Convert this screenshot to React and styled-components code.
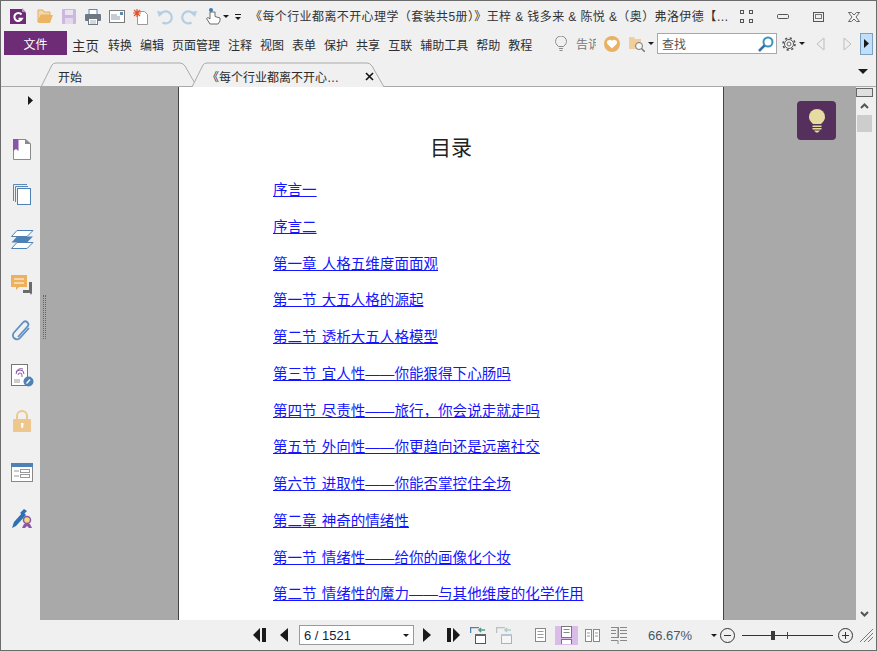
import React from 'react';
import styled, { createGlobalStyle } from 'styled-components';

const GlobalStyle = createGlobalStyle`
  html, body {
    margin: 0;
    padding: 0;
    overflow: hidden;
    background: #f0f0f0;
  }
`;

const Window = styled.div`
  box-sizing: border-box;
  width: 877px;
  height: 651px;
  border: 1px solid #6b6b6b;
  background: #f0f0f0;
  display: flex;
  flex-direction: column;
  overflow: hidden;
  color: #2b2b2b;
  font-family: "Liberation Sans", "Noto Sans CJK SC", sans-serif;
  font-size: 12px;
`;

const TitleBar = styled.div`
  height: 29px;
  flex: none;
  display: flex;
  align-items: center;
  padding: 2px 0 0 9px;
  box-sizing: border-box;
`;

const QuickIcon = styled.svg`
  flex: none;
  display: block;
  margin-left: ${({ $ml }) => $ml ?? 8}px;
`;

const Caret = styled.span`
  flex: none;
  width: 0;
  height: 0;
  margin-left: ${({ $ml }) => $ml ?? 3}px;
  border-left: ${({ $s }) => $s ?? 3}px solid transparent;
  border-right: ${({ $s }) => $s ?? 3}px solid transparent;
  border-top: ${({ $s }) => $s ?? 3}px solid #1c1c1c;
`;

const DashCaret = styled(Caret)`
  position: relative;
  margin-left: 6px;
  margin-top: 3px;
  &::before {
    content: '';
    position: absolute;
    left: -3px;
    top: -6px;
    width: 6px;
    height: 1px;
    background: #1c1c1c;
  }
`;

const DocTitle = styled.div`
  width: 478px;
  margin-left: 9px;
  flex: none;
  white-space: nowrap;
  overflow: hidden;
  font-size: 12px;
  line-height: 18px;
  letter-spacing: 0.4px;
  color: #333;
`;

const WinControls = styled.div`
  display: flex;
  align-items: center;
  margin-left: 12px;
`;

const MenuBar = styled.div`
  height: 27px;
  flex: none;
  display: flex;
  align-items: flex-start;
  padding: 1px 3px 0;
  box-sizing: border-box;
`;

const FileButton = styled.div`
  width: 63px;
  height: 24px;
  background: #6d2c75;
  color: #fff;
  display: flex;
  align-items: center;
  justify-content: center;
  font-size: 12px;
  flex: none;
`;

const MenuItems = styled.nav`
  display: flex;
  margin-left: 5px;
  height: 27px;
  align-items: center;
  gap: 8px;
`;

const MenuItem = styled.span`
  font-size: ${({ $home }) => ($home ? 13.5 : 12)}px;
  margin-right: ${({ $home }) => ($home ? 1 : 0)}px;
  white-space: nowrap;
  color: #2e2e2e;
`;

const MenuTools = styled.div`
  margin-left: auto;
  display: flex;
  align-items: center;
  height: 25px;
`;

const TellMe = styled.span`
  width: 20px;
  margin-left: 9px;
  overflow: hidden;
  white-space: nowrap;
  color: #777;
  font-size: 12px;
`;

const SearchBox = styled.div`
  box-sizing: border-box;
  width: 120px;
  height: 21px;
  margin-left: 3px;
  padding: 0 2px 0 4px;
  background: #fff;
  border: 1px solid #a8a8a8;
  display: flex;
  align-items: center;
  justify-content: space-between;
  color: #555;
  font-size: 12px;
`;

const NextButton = styled.div`
  box-sizing: border-box;
  width: 13px;
  height: 22px;
  margin-left: 8px;
  background: #bfdffa;
  border: 1px solid #7da2c1;
  display: flex;
  align-items: center;
  justify-content: center;
`;

const TabBar = styled.div`
  box-sizing: border-box;
  height: 30px;
  flex: none;
  display: flex;
  align-items: flex-end;
  position: relative;
  padding-left: 40px;
  border-bottom: 1px solid #a9a9a9;
`;

const Tab = styled.div`
  position: relative;
  box-sizing: border-box;
  width: ${({ $w }) => $w}px;
  height: 25px;
  margin-left: ${({ $ml }) => $ml ?? 0}px;
  margin-bottom: -1px;
  display: flex;
  align-items: center;
  padding: 4px 12px 0 ${({ $pl }) => $pl}px;
  font-size: 12px;
  color: #2b2b2b;
  white-space: nowrap;
`;

const TabShape = styled.svg`
  position: absolute;
  left: 0;
  top: 0;
`;

const TabLabel = styled.span`
  position: relative;
  flex: 1;
`;

const TabClose = styled.svg`
  position: relative;
  flex: none;
`;

const TabsMenu = styled(Caret)`
  position: absolute;
  right: 8px;
  top: 12px;
`;

const Main = styled.div`
  flex: 1;
  min-height: 0;
  display: flex;
`;

const Sidebar = styled.aside`
  width: 39px;
  flex: none;
  display: flex;
  flex-direction: column;
  align-items: center;
  box-sizing: border-box;
  padding-left: 3px;
`;

const SideToggle = styled.div`
  width: 100%;
  height: 27px;
  display: flex;
  align-items: center;
  justify-content: flex-end;
  padding-right: 7px;
  box-sizing: border-box;
  margin-bottom: 13px;
`;

const SideSlot = styled.div`
  height: 45.2px;
  flex: none;
  display: flex;
  align-items: center;
  justify-content: center;
  margin-top: ${({ $mt }) => $mt ?? 0}px;
`;

const Viewer = styled.div`
  position: relative;
  flex: 1;
  min-width: 0;
  background: #a9a9a9;
  padding-left: 138px;
  overflow: hidden;
`;

const Grip = styled.div`
  position: absolute;
  left: 3px;
  top: 208px;
  width: 1px;
  height: 44px;
  border-left: 1px dotted #666;
  border-right: 1px dotted #666;
`;

const Page = styled.section`
  box-sizing: border-box;
  width: 546px;
  height: 100%;
  background: #fff;
  border-left: 1px solid #444;
  border-right: 1px solid #444;
  padding-top: 46px;
`;

const Heading = styled.h1`
  margin: 0 0 17px;
  font-size: 21px;
  line-height: 30px;
  font-weight: 400;
  text-align: center;
  color: #222;
`;

const TocList = styled.div`
  display: flex;
  flex-direction: column;
  gap: 16.75px;
  padding-left: 94px;
`;

const TocLink = styled.a`
  font-size: 14.55px;
  line-height: 20px;
  color: #1414ff;
  text-decoration: underline;
  white-space: nowrap;
  word-spacing: 1px;
`;

const HintButton = styled.div`
  position: absolute;
  top: 14px;
  right: 20px;
  width: 39px;
  height: 39px;
  border-radius: 4px;
  background: #56305c;
  display: flex;
  align-items: center;
  justify-content: center;
`;

const Scrollbar = styled.div`
  width: 20px;
  flex: none;
  display: flex;
  flex-direction: column;
  align-items: flex-start;
  padding-top: 1px;
  box-sizing: border-box;
`;

const SplitBox = styled.div`
  box-sizing: border-box;
  width: 17px;
  height: 9px;
  background: #e0e0e0;
  border: 1px solid #666;
`;

const ScrollArrow = styled.svg`
  margin: ${({ $bottom }) => ($bottom ? 'auto 0 3px 4px' : '6px 0 6px 4px')};
`;

const ScrollThumb = styled.div`
  width: 15px;
  height: 17px;
  margin-left: 1px;
  background: #cdcdcd;
`;

const StatusBar = styled.footer`
  height: 30px;
  flex: none;
  display: flex;
  align-items: center;
  padding-left: 252px;
  box-sizing: border-box;
`;

const PageSelect = styled.div`
  box-sizing: border-box;
  width: 115px;
  height: 20px;
  margin-left: 11px;
  padding: 0 4px;
  background: #fff;
  border: 1px solid #9a9a9a;
  display: flex;
  align-items: center;
  justify-content: space-between;
  font-size: 13px;
  color: #1b1b3a;
`;

const ViewButton = styled.div`
  flex: none;
  width: ${({ $w }) => $w ?? 16}px;
  height: 19px;
  margin-left: ${({ $ml }) => $ml ?? 0}px;
  background: ${({ $active }) => ($active ? '#d9bde8' : 'transparent')};
  display: flex;
  align-items: center;
  justify-content: center;
`;

const ZoomText = styled.span`
  width: 44px;
  margin-left: 21px;
  flex: none;
  font-size: 13px;
  color: #46566b;
  white-space: nowrap;
`;

const ZoomTrack = styled.div`
  position: relative;
  width: 91px;
  height: 1px;
  margin-left: 7px;
  background: #333;
  flex: none;
`;

const ZoomThumb = styled.span`
  position: absolute;
  left: 29px;
  top: -4px;
  width: 4px;
  height: 9px;
  background: #3a3a3a;
`;

const ZoomTick = styled.span`
  position: absolute;
  left: 45px;
  top: -3px;
  width: 1px;
  height: 7px;
  background: #444;
`;

const Triangle = ({ dir = 'right', size = 10, h, fill = '#1a1a1a', ml }) => {
  const height = h ?? size;
  const pts = dir === 'right'
    ? `0,0 ${size},${height / 2} 0,${height}`
    : `${size},0 0,${height / 2} ${size},${height}`;
  return (
    <QuickIcon $ml={ml ?? 0} width={size} height={height} viewBox={`0 0 ${size} ${height}`}>
      <polygon points={pts} fill={fill} />
    </QuickIcon>
  );
};

const OutlineTriangle = ({ dir, ml }) => (
  <QuickIcon $ml={ml} width="9" height="14" viewBox="0 0 9 14">
    <polygon
      points={dir === 'left' ? '8,1 1,7 8,13' : '1,1 8,7 1,13'}
      fill="none"
      stroke="#bdbdbd"
    />
  </QuickIcon>
);

const DoubleTriangle = ({ dir, ml = 0 }) => (
  <QuickIcon $ml={ml} width="14" height="14" viewBox="0 0 14 14">
    {dir === 'left' ? (
      <>
        <polygon points="7,0 0,7 7,14" fill="#1a1a1a" />
        <rect x="9" y="0" width="4" height="14" fill="#1a1a1a" />
      </>
    ) : (
      <>
        <rect x="1" y="0" width="4" height="14" fill="#1a1a1a" />
        <polygon points="7,0 14,7 7,14" fill="#1a1a1a" />
      </>
    )}
  </QuickIcon>
);

const LogoIcon = () => (
  <QuickIcon $ml={0} width="17" height="17" viewBox="0 0 17 17">
    <path d="M0 1h12l4 4v11H0z" fill="#6d2c75" />
    <path d="M12 0l4 4h-4z" fill="#b78cc0" />
    <path d="M11.5 6.5a4 4 0 1 0 .5 4.2H8.5" fill="none" stroke="#fff" strokeWidth="2" />
  </QuickIcon>
);

const FolderIcon = () => (
  <QuickIcon $ml={10} width="16" height="15" viewBox="0 0 16 15">
    <path d="M1 1h5l1 2h6v3H4L1 13z" fill="#f2d9ac" stroke="#e3ad62" />
    <path d="M4 6h12l-3 8H1z" fill="#ecb565" />
  </QuickIcon>
);

const SaveIcon = () => (
  <QuickIcon width="16" height="15" viewBox="0 0 16 15">
    <rect x="1" y="0" width="14" height="15" rx="1" fill="#cdb7dd" />
    <rect x="4" y="1" width="8" height="5" fill="#ece3f2" />
    <rect x="4" y="9" width="8" height="6" fill="#e3d8ec" />
  </QuickIcon>
);

const PrintIcon = () => (
  <QuickIcon width="16" height="16" viewBox="0 0 16 16">
    <rect x="4" y="0.5" width="8" height="5" fill="#fff" stroke="#5c89b4" />
    <rect x="0" y="5" width="16" height="7" rx="1" fill="#6d7883" />
    <rect x="3.5" y="9.5" width="9" height="6" fill="#fff" stroke="#6d7883" />
    <path d="M5 12h6M5 14h6" stroke="#a9b2bb" />
  </QuickIcon>
);

const MailIcon = () => (
  <QuickIcon width="16" height="13" viewBox="0 0 16 13">
    <rect x="0.5" y="0.5" width="15" height="12" fill="#fff" stroke="#7b7b7b" />
    <rect x="11" y="2" width="3" height="3" fill="#5c89b4" />
    <path d="M2 5h6M2 7h9M2 9h9" stroke="#8f9aa5" />
  </QuickIcon>
);

const NewIcon = () => (
  <QuickIcon width="16" height="16" viewBox="0 0 16 16">
    <path d="M4.5 2.5h7l3 3v10h-10z" fill="#fff" stroke="#9a9a9a" />
    <path d="M4 0v8M0 4h8M1 1l6 6M7 1L1 7" stroke="#e0552c" strokeWidth="1.2" />
  </QuickIcon>
);

const HistoryIcon = ({ flip }) => (
  <QuickIcon width="16" height="16" viewBox="0 0 16 16" style={flip ? { transform: 'scaleX(-1)' } : undefined}>
    <path d="M3.5 5.5a6 6 0 1 1 2 8" fill="none" stroke="#b5cee3" strokeWidth="2.2" />
    <polygon points="0,2 7,3 2,8" fill="#b5cee3" />
  </QuickIcon>
);

const HandIcon = () => (
  <QuickIcon width="16" height="17" viewBox="0 0 16 17">
    <rect x="4" y="0" width="4" height="4" rx="2" fill="#3f7cb5" />
    <path d="M5 4v7L3 9.500 1.500 10.500 5 16h8l2-3v-3l-5-1.500V4z" fill="#fff" stroke="#6b6b6b" />
  </QuickIcon>
);

const FullScreenIcon = () => (
  <QuickIcon $ml={0} width="13" height="13" viewBox="0 0 13 13">
    <g fill="none" stroke="#555">
      <rect x="0.500" y="0.500" width="3" height="3" />
      <rect x="9.500" y="0.500" width="3" height="3" />
      <rect x="0.500" y="9.500" width="3" height="3" />
      <rect x="9.500" y="9.500" width="3" height="3" />
    </g>
  </QuickIcon>
);

const MinimizeIcon = () => (
  <QuickIcon $ml={24} width="12" height="5" viewBox="0 0 12 5">
    <rect x="0.500" y="0.500" width="11" height="4" rx="1" fill="none" stroke="#555" />
  </QuickIcon>
);

const MaximizeIcon = () => (
  <QuickIcon $ml={24} width="11" height="10" viewBox="0 0 11 10">
    <rect x="0.500" y="0.500" width="10" height="9" fill="none" stroke="#555" />
    <rect x="2.500" y="2.500" width="6" height="4" fill="none" stroke="#777" />
  </QuickIcon>
);

const CloseIcon = () => (
  <QuickIcon $ml={24} width="12" height="10" viewBox="0 0 12 10">
    <path d="M.5 .5h3L6 3 8.500 .5h3L8 5l3.500 4.500h-3L6 7 3.500 9.500h-3L4 5z" fill="#f4f4f4" stroke="#666" />
  </QuickIcon>
);

const BulbOutline = () => (
  <QuickIcon $ml={0} width="12" height="16" viewBox="0 0 12 16">
    <path d="M3.500 10.500C1 8.500 .5 6.500 .5 5.500a5.500 5.500 0 0 1 11 0c0 1-.5 3-3 5z" fill="none" stroke="#8a8a8a" />
    <path d="M4 12.500h4M4.500 14.500h3" stroke="#8a8a8a" />
  </QuickIcon>
);

const HeartIcon = () => (
  <QuickIcon $ml={8} width="16" height="16" viewBox="0 0 16 16">
    <circle cx="8" cy="8" r="8" fill="#eab164" />
    <path d="M8 12.500L3.500 8a2.700 2.700 0 0 1 4.500-3 2.700 2.700 0 0 1 4.500 3z" fill="#fff" />
  </QuickIcon>
);

const FolderSearchIcon = () => (
  <QuickIcon $ml={9} width="16" height="16" viewBox="0 0 16 16">
    <path d="M0 1h5l1 2h6v10H0z" fill="#f0cf9c" />
    <circle cx="10" cy="10" r="3.500" fill="#f5f5f5" stroke="#777" />
    <path d="M12.500 12.500L16 16" stroke="#777" strokeWidth="1.500" />
  </QuickIcon>
);

const SearchIcon = () => (
  <QuickIcon $ml={0} width="16" height="16" viewBox="0 0 16 16">
    <circle cx="10" cy="6" r="4.500" fill="#fff" stroke="#3a93bd" strokeWidth="2" />
    <path d="M6.500 9.500L1 15" stroke="#3a6ea5" strokeWidth="2.500" />
  </QuickIcon>
);

const GearIcon = () => (
  <QuickIcon $ml={5} width="14" height="14" viewBox="0 0 14 14">
    <circle cx="7" cy="7" r="6" fill="none" stroke="#555" strokeWidth="1.600" strokeDasharray="2.200 2.512" />
    <circle cx="7" cy="7" r="4.500" fill="#f4f4f4" stroke="#555" />
    <circle cx="7" cy="7" r="2" fill="none" stroke="#666" />
  </QuickIcon>
);

const TabOutline = ({ w, active }) => (
  <TabShape width={w} height="25" viewBox={`0 0 ${w} 25`}>
    <path
      d={`M0 25 L11 3 Q12 1 15 1 H${w - 19} Q${w - 16} 1 ${w - 14} 4 L${w - 2} 25`}
      fill={active ? '#f0f0f0' : 'none'}
      stroke="#a9a9a9"
    />
  </TabShape>
);

const BookmarkPanelIcon = () => (
  <svg width="18" height="21" viewBox="0 0 18 21">
    <path d="M.5 .5H13l4.500 4.500v15.500H.5z" fill="#fff" stroke="#8a8a8a" />
    <path d="M12 0l6 5h-6z" fill="#8a8a8a" />
    <path d="M0 0h5.500v12L3 10 0 12z" fill="#8c56a8" />
  </svg>
);

const PagesPanelIcon = () => (
  <svg width="18" height="21" viewBox="0 0 18 21">
    <path d="M.5 17V.5H14M2.500 18V2.500H15" fill="none" stroke="#5c89b4" />
    <rect x="4.500" y="4.500" width="13" height="16" fill="#fff" stroke="#4f82b4" />
  </svg>
);

const LayersPanelIcon = () => (
  <svg width="23" height="19" viewBox="0 0 23 19">
    <path d="M6 .5h16l-6 6H.5z" fill="#fff" stroke="#4f82b4" />
    <path d="M6 6.500h16l-6 6H.5z" fill="#4f82b4" />
    <path d="M6 12.500h16l-6 6H.5z" fill="#fff" stroke="#4f82b4" />
  </svg>
);

const CommentPanelIcon = () => (
  <svg width="23" height="21" viewBox="0 0 23 21">
    <path d="M0 0h16v12H8l-3 3v-3H0z" fill="#eeb05c" />
    <path d="M3 4h10M3 8h10" stroke="#fff" />
    <path d="M18 7h3v11l-1 2-1-2h-7v-3h6z" fill="#6b6b6b" />
  </svg>
);

const AttachPanelIcon = () => (
  <svg width="20" height="22" viewBox="0 0 20 22">
    <path
      d="M7 18L16.500 7.500a3 3 0 0 0-4.500-4L3 13.500a4 4 0 0 0 6 5.500L18 9"
      transform="translate(-1 0)"
      fill="none"
      stroke="#5c8fc2"
      strokeWidth="1.800"
    />
  </svg>
);

const SignPanelIcon = () => (
  <svg width="23" height="23" viewBox="0 0 23 23">
    <rect x=".5" y=".5" width="16" height="21" fill="#fff" stroke="#777" />
    <path d="M5 10a4 4 0 0 1 8 0M7 11a2 2 0 0 1 4 0v2M5 8a6 6 0 0 1 7-3" fill="none" stroke="#8c56a8" />
    <path d="M3 16h6M3 18h6" stroke="#9a9a9a" />
    <circle cx="17.500" cy="17.500" r="5" fill="#4f82b4" />
    <path d="M15.500 19.500l3.500-4" stroke="#fff" strokeWidth="1.300" />
  </svg>
);

const LockPanelIcon = () => (
  <svg width="18" height="22" viewBox="0 0 18 22">
    <path d="M4 9V6a5 5 0 0 1 10 0v3" fill="none" stroke="#edc78d" strokeWidth="2" />
    <rect x="0" y="9" width="18" height="13" rx="1" fill="#edc78d" />
    <path d="M8 13h2.500v2l-.5 3H8.500L8 15z" fill="#fff" />
  </svg>
);

const FormPanelIcon = () => (
  <svg width="22" height="19" viewBox="0 0 22 19">
    <rect x=".5" y=".5" width="21" height="18" fill="#fff" stroke="#888" />
    <rect x="0" y="0" width="22" height="4" fill="#4f82b4" />
    <path d="M3 8h5M3 13h5" stroke="#999" />
    <rect x="9.500" y="6.500" width="9" height="3" fill="#fff" stroke="#999" />
    <rect x="9.500" y="11.500" width="9" height="3" fill="#fff" stroke="#999" />
  </svg>
);

const CertPanelIcon = () => (
  <svg width="22" height="21" viewBox="0 0 22 21">
    <path d="M1 20l2-6L12 4l3 3L5 18z" fill="#2f6fb3" />
    <path d="M9 5l4-4 3 2-4 4z" fill="#2f6fb3" />
    <circle cx="16" cy="12" r="3.500" fill="#f0dc7a" stroke="#8c56a8" strokeWidth="1.500" />
    <path d="M13 16l-2 4h3l2-2 2 2h3l-2-4z" fill="#8c56a8" />
  </svg>
);

const BulbFilled = () => (
  <svg width="18" height="24" viewBox="0 0 18 24">
    <path d="M5 15C2 12 1 10.500 1 8a8 8 0 0 1 16 0c0 2.500-1 4-4 7z" fill="#e6dba0" />
    <rect x="4.500" y="16.500" width="9" height="1.500" fill="#e6dba0" />
    <rect x="4.500" y="19" width="9" height="1.500" fill="#e6dba0" />
    <path d="M6 21.500h6l-2 2H8z" fill="#e6dba0" />
  </svg>
);

const Chevron = ({ up, bottom }) => (
  <ScrollArrow $bottom={bottom} width="9" height="6" viewBox="0 0 9 6">
    <path d={up ? 'M1 5l3.500-3.500L8 5' : 'M1 1l3.500 3.500L8 1'} fill="none" stroke="#555" strokeWidth="2" />
  </ScrollArrow>
);

const BackViewIcon = ({ faded }) => (
  <QuickIcon $ml={faded ? 10 : 10} width="16" height="17" viewBox="0 0 16 17" opacity={faded ? 0.4 : 1}>
    <path d="M.5 6V.5H9" fill="none" stroke={faded ? '#777' : '#4f82b4'} strokeWidth="1.500" />
    <path d="M15 3H9M11 1L9 3l2 2" fill="none" stroke="#4f9a8a" strokeWidth="1.500" />
    <rect x="5.500" y="7.500" width="10" height="9" fill="#fff" stroke="#555" />
    <rect x="5" y="7" width="11" height="2" fill={faded ? '#5c89b4' : '#666'} />
  </QuickIcon>
);

const SinglePageIcon = () => (
  <svg width="11" height="14" viewBox="0 0 11 14">
    <rect x=".5" y=".5" width="10" height="13" fill="#fff" stroke="#888" />
    <path d="M2.500 3.500h6M2.500 6.500h6M2.500 9.500h6" stroke="#999" />
  </svg>
);

const ContinuousIcon = () => (
  <svg width="11" height="18" viewBox="0 0 11 18">
    <rect x=".5" y=".5" width="10" height="11" fill="#fff" stroke="#777" />
    <path d="M2.500 3.500h6M2.500 6.500h6" stroke="#888" />
    <rect x=".5" y="13.500" width="10" height="5" fill="#fff" stroke="#777" />
  </svg>
);

const FacingIcon = () => (
  <svg width="15" height="13" viewBox="0 0 15 13">
    <rect x=".5" y=".5" width="6" height="12" fill="#fff" stroke="#888" />
    <rect x="8.500" y=".5" width="6" height="12" fill="#fff" stroke="#888" />
    <path d="M2 4h3M2 7h3M10 4h3M10 7h3" stroke="#999" />
  </svg>
);

const ContFacingIcon = () => (
  <svg width="16" height="17" viewBox="0 0 16 17">
    <path d="M0 .5h7v10H0M0 3.500h5M0 6.500h5M9 .5h7M9 3.500h7M9 6.500h7M9 10.500h7M0 13.500h7v3.500M9 13.500h7" fill="none" stroke="#888" />
    <path d="M7.500 0v11" stroke="#888" />
  </svg>
);

const ZoomButton = ({ plus, ml }) => (
  <QuickIcon $ml={ml} width="15" height="15" viewBox="0 0 15 15">
    <circle cx="7.500" cy="7.500" r="7" fill="none" stroke="#333" />
    <path d={plus ? 'M4 7.500h7M7.500 4v7' : 'M4 7.500h7'} stroke="#333" />
  </QuickIcon>
);

const ResizeGrip = () => (
  <QuickIcon $ml={7} width="13" height="13" viewBox="0 0 13 13">
    <path d="M0 13L13 0M4 13L13 4M8 13l5-5" stroke="#777" />
  </QuickIcon>
);

const menuItems = ['转换', '编辑', '页面管理', '注释', '视图', '表单', '保护', '共享', '互联', '辅助工具', '帮助', '教程'];

const sidePanels = [
  { id: 'bookmarks', icon: <BookmarkPanelIcon /> },
  { id: 'pages', icon: <PagesPanelIcon /> },
  { id: 'layers', icon: <LayersPanelIcon /> },
  { id: 'comments', icon: <CommentPanelIcon /> },
  { id: 'attachments', icon: <AttachPanelIcon /> },
  { id: 'signatures', icon: <SignPanelIcon /> },
  { id: 'security', icon: <LockPanelIcon /> },
  { id: 'forms', icon: <FormPanelIcon />, mt: 7 },
  { id: 'certs', icon: <CertPanelIcon /> },
];

const toc = [
  '序言一',
  '序言二',
  '第一章 人格五维度面面观',
  '第一节 大五人格的源起',
  '第二节 透析大五人格模型',
  '第三节 宜人性——你能狠得下心肠吗',
  '第四节 尽责性——旅行，你会说走就走吗',
  '第五节 外向性——你更趋向还是远离社交',
  '第六节 进取性——你能否掌控住全场',
  '第二章 神奇的情绪性',
  '第一节 情绪性——给你的画像化个妆',
  '第二节 情绪性的魔力——与其他维度的化学作用',
];

export default function App() {
  return (
    <>
      <GlobalStyle />
      <Window>
        <TitleBar>
          <LogoIcon />
          <FolderIcon />
          <SaveIcon />
          <PrintIcon />
          <MailIcon />
          <NewIcon />
          <HistoryIcon />
          <HistoryIcon flip />
          <HandIcon />
          <Caret $ml={2} />
          <DashCaret />
          <DocTitle>《每个行业都离不开心理学（套装共5册）》王梓 &amp; 钱多来 &amp; 陈悦 &amp;（奥）弗洛伊德【…</DocTitle>
          <WinControls>
            <FullScreenIcon />
            <MinimizeIcon />
            <MaximizeIcon />
            <CloseIcon />
          </WinControls>
        </TitleBar>

        <MenuBar>
          <FileButton>文件</FileButton>
          <MenuItems>
            <MenuItem $home>主页</MenuItem>
            {menuItems.map(item => (
              <MenuItem key={item}>{item}</MenuItem>
            ))}
          </MenuItems>
          <MenuTools>
            <BulbOutline />
            <TellMe>告诉</TellMe>
            <HeartIcon />
            <FolderSearchIcon />
            <Caret />
            <SearchBox>
              查找
              <SearchIcon />
            </SearchBox>
            <GearIcon />
            <Caret />
            <OutlineTriangle dir="left" ml={11} />
            <OutlineTriangle dir="right" ml={18} />
            <NextButton>
              <Triangle size={5} h={9} />
            </NextButton>
          </MenuTools>
        </MenuBar>

        <TabBar>
          <Tab $w={158} $pl={17}>
            <TabOutline w={158} />
            <TabLabel>开始</TabLabel>
          </Tab>
          <Tab $w={194} $ml={-7} $pl={15}>
            <TabOutline w={194} active />
            <TabLabel>《每个行业都离不开心…</TabLabel>
            <TabClose width="9" height="9" viewBox="0 0 9 9">
              <path d="M1 1l7 7M8 1L1 8" stroke="#111" strokeWidth="1.600" />
            </TabClose>
          </Tab>
          <TabsMenu $s={5} />
        </TabBar>

        <Main>
          <Sidebar>
            <SideToggle>
              <Triangle size={5} h={9} />
            </SideToggle>
            {sidePanels.map(panel => (
              <SideSlot key={panel.id} $mt={panel.mt}>
                {panel.icon}
              </SideSlot>
            ))}
          </Sidebar>

          <Viewer>
            <Grip />
            <Page>
              <Heading>目录</Heading>
              <TocList>
                {toc.map(entry => (
                  <div key={entry}>
                    <TocLink href="#">{entry}</TocLink>
                  </div>
                ))}
              </TocList>
            </Page>
            <HintButton>
              <BulbFilled />
            </HintButton>
          </Viewer>

          <Scrollbar>
            <SplitBox />
            <Chevron up />
            <ScrollThumb />
            <Chevron bottom />
          </Scrollbar>
        </Main>

        <StatusBar>
          <DoubleTriangle dir="left" />
          <QuickIcon $ml={12} width="9" height="14" viewBox="0 0 9 14">
            <polygon points="9,0 1,7 9,14" fill="#1a1a1a" />
          </QuickIcon>
          <PageSelect>
            6 / 1521
            <Caret $s={3} />
          </PageSelect>
          <QuickIcon $ml={9} width="9" height="14" viewBox="0 0 9 14">
            <polygon points="0,0 8,7 0,14" fill="#1a1a1a" />
          </QuickIcon>
          <DoubleTriangle dir="right" ml={14} />
          <BackViewIcon />
          <BackViewIcon faded />
          <ViewButton $ml={20.5} $w={16}>
            <SinglePageIcon />
          </ViewButton>
          <ViewButton $ml={6.5} $w={23} $active>
            <ContinuousIcon />
          </ViewButton>
          <ViewButton $ml={6} $w={16}>
            <FacingIcon />
          </ViewButton>
          <ViewButton $ml={11} $w={16}>
            <ContFacingIcon />
          </ViewButton>
          <ZoomText>66.67%</ZoomText>
          <Caret $ml={19} />
          <ZoomButton ml={3} />
          <ZoomTrack>
            <ZoomThumb />
            <ZoomTick />
          </ZoomTrack>
          <ZoomButton plus ml={5} />
          <ResizeGrip />
        </StatusBar>
      </Window>
    </>
  );
}
